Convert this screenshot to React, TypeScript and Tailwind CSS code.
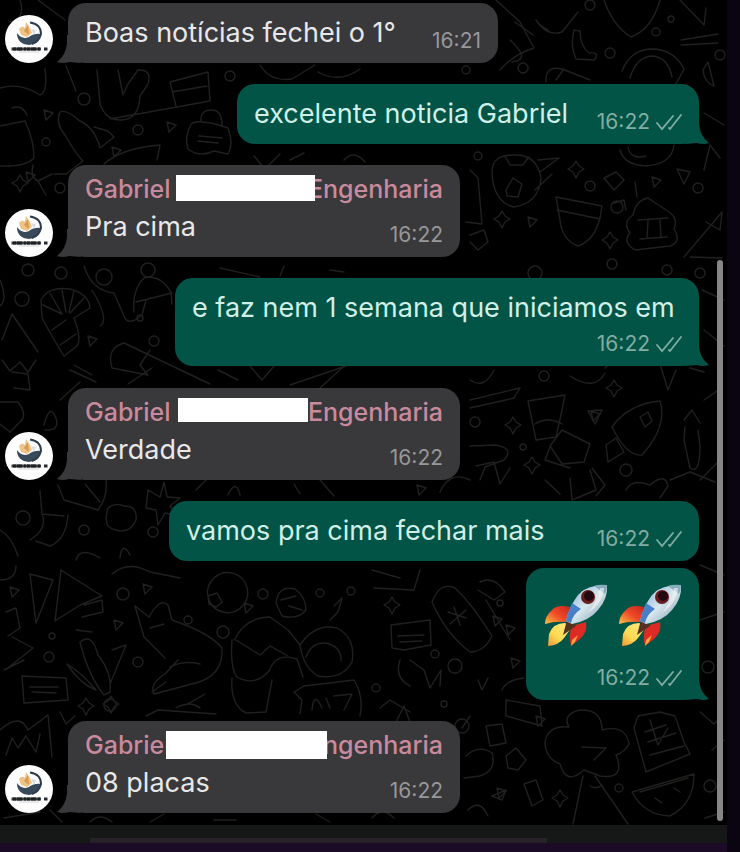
import React from 'react';

type Message = {
  id: number;
  from: 'me' | 'gabriel';
  time: string;
  text?: string;
  width: string;
  // classes of the bar that hides the middle of the sender's name
  mask?: string;
  rockets?: number;
  timeBelow?: boolean;
  tail?: boolean;
  spacing: string;
};

const MESSAGES: Message[] = [
  { id: 1, from: 'gabriel', text: 'Boas notícias fechei o 1°', time: '16:21', width: 'w-[430px]', tail: true, spacing: '' },
  { id: 2, from: 'me', text: 'excelente noticia Gabriel', time: '16:22', width: 'w-[462px]', tail: true, spacing: 'mt-[21px]' },
  { id: 3, from: 'gabriel', text: 'Pra cima', time: '16:22', width: 'w-[392px]', mask: 'left-[91px] w-[139px] h-[26px]', tail: true, spacing: 'mt-[21px]' },
  { id: 4, from: 'me', text: 'e faz nem 1 semana que iniciamos em', time: '16:22', width: 'w-[524px]', timeBelow: true, tail: true, spacing: 'mt-[21px]' },
  { id: 5, from: 'gabriel', text: 'Verdade', time: '16:22', width: 'w-[392px]', mask: 'left-[93px] w-[130px] h-6', tail: true, spacing: 'mt-[22px]' },
  { id: 6, from: 'me', text: 'vamos pra cima fechar mais', time: '16:22', width: 'w-[530px]', spacing: 'mt-[21px]' },
  { id: 7, from: 'me', rockets: 2, time: '16:22', width: 'w-[173px]', timeBelow: true, tail: true, spacing: 'mt-[7px]' },
  { id: 8, from: 'gabriel', text: '08 placas', time: '16:22', width: 'w-[392px]', mask: 'left-[81px] w-[161px] h-7', tail: true, spacing: 'mt-[21px]' },
];

// [cx, cy, r]
const DOTS = [
  [84, 99, 6], [138, 130, 5], [230, 76, 5], [46, 142, 4], [60, 188, 5], [590, 5, 5], [656, 32, 4], [671, 19, 3], [610, 53, 5],
  [523, 68, 5], [466, 70, 4], [720, 55, 5], [590, 186, 5], [698, 188, 5], [617, 207, 6], [478, 156, 4], [28, 270, 6], [61, 273, 6],
  [104, 277, 8], [22, 299, 7], [148, 270, 7], [154, 341, 5], [140, 318, 3], [535, 273, 7], [612, 264, 5], [667, 270, 5], [700, 273, 5],
  [475, 422, 5], [523, 447, 3], [626, 470, 6], [23, 518, 7], [84, 530, 5], [153, 532, 5], [544, 376, 5], [49, 657, 5], [52, 636, 3],
  [138, 662, 5], [188, 620, 4], [223, 632, 6], [263, 594, 5], [320, 593, 4], [351, 591, 4], [435, 654, 4], [455, 666, 7], [619, 788, 4],
  [710, 786, 6], [462, 726, 7], [444, 704, 3], [110, 705, 6], [708, 667, 6], [300, 352, 4], [500, 603, 3], [376, 688, 4], [123, 594, 6],
];

// small triangles and sparkles, placed by their centre
const TRIANGLES = [
  [171, 126], [116, 151], [48, 114], [92, 340], [532, 221], [595, 415], [510, 629], [497, 620], [501, 792], [147, 588], [118, 624],
  [248, 607], [540, 720], [515, 662], [421, 489], [14, 591], [30, 176], [656, 181],
];

const SPARKLES = [
  [576, 169], [614, 388], [513, 425], [392, 605], [111, 704], [532, 465], [610, 240], [502, 219], [20, 183], [86, 706], [560, 798], [448, 792],
];

const DOODLES = [
  // bottle, bag and cup in the upper left
  'M97 70 L100 104 Q106 121 122 120 Q139 119 140 96 L148 84 Q152 69 138 70 L128 84 L123 95 L118 70 M110 119 L210 101 L208 72 L170 82 L176 106 M172 92 L207 86',
  'M0 88 Q20 82 40 95 Q48 92 45 69 M0 126 L25 121 Q34 140 34 158 Q26 167 0 166 M27 115 Q22 104 12 108',
  'M60 112 Q66 109 80 121 Q95 128 100 148 M60 112 Q55 123 65 135 Q75 153 83 161 L66 174 L54 174 M100 148 L114 137 L108 131 L94 127 M104 164 Q122 148 160 145 L157 160 M33 165 Q30 178 38 181 L52 174 M38 181 L46 195',
  'M191 124 Q199 118 228 128 Q234 144 228 154 L214 151 Q200 158 188 149 Q184 138 191 124 M201 122 Q200 109 213 110 Q222 111 222 125 M199 136 L222 138 M198 141 L218 143',
  'M254 156 L265 169 L280 154 M290 160 L304 153 M344 160 Q354 149 365 162 M260 65 Q270 82 292 79 L315 65 M318 72 Q339 84 360 69 M66 66 L72 81 L76 91 M20 0 Q26 18 10 22 M38 0 L65 20',
  // top right
  'M604 0 Q613 26 631 37 Q652 29 660 0 M622 71 Q630 50 651 49 Q674 49 684 69 L676 84 M630 78 Q636 57 652 56 Q668 57 672 77 M546 82 Q545 65 562 69 L590 80 M556 80 L564 69 M680 0 L704 25 L706 8 M681 40 L718 34 M681 45 L718 43',
  'M574 30 Q570 46 576 59 L594 60 Q601 52 589 53 Q580 46 580 31 Z M536 20 Q547 37 562 32 L578 12 M540 25 L548 30 M496 0 L520 22 L534 48 Q514 54 500 70 M515 22 L533 35 M510 40 Q532 60 512 62 M708 62 L714 86 Q704 82 703 70 Z',
  'M492 172 Q492 154 516 155 Q537 155 541 178 Q539 203 514 207 Q493 202 492 172 Z M505 156 L510 165 L523 165 L529 157 M506 190 L513 178 L522 184 L518 197 L507 196 Z M540 172 L559 158 L538 160 M535 190 L552 174',
  'M556 197 L602 206 L600 218 Q594 241 578 246 Q562 240 560 220 Z M557 210 L600 219 M620 150 Q624 165 646 166 Q672 164 674 145 M628 147 Q630 160 646 156 M604 178 L616 172 L624 180 L614 190 Z M677 169 L690 172 L684 184 Z',
  'M633 215 Q636 200 648 198 L666 210 Q679 217 674 229 Q682 242 670 246 L635 250 Q622 242 630 233 Q622 222 633 215 Z M638 220 L668 218 M640 239 L667 237 M648 220 L647 238 M660 220 L661 237 M637 197 L635 182',
  'M684 257 L722 212 L720 230 L706 222 M470 170 L478 178 L482 224 L466 222 M470 235 L484 230 L488 242 L478 250 L470 242 M690 257 L722 258 M704 113 L724 125 M704 170 L710 145 L720 158 M614 203 L624 200 L626 210',
  // left middle
  'M41 300 Q48 286 70 289 Q89 294 90 308 L74 318 Q82 339 77 346 L64 356 Q52 337 42 318 Z M50 293 L62 314 M43 305 L62 314 M62 290 L66 312 M74 291 L69 312 M84 298 L70 313 M52 330 L66 320 M60 345 L76 334',
  'M84 266 Q92 291 114 293 L124 316 Q128 327 142 315 L146 300 M92 290 Q110 320 100 326 M0 280 Q8 300 0 306 M12 314 L38 352 M12 314 L2 340 M2 360 L10 371 L20 362 L28 372 L36 360 M12 372 L28 374 L30 390 L14 388',
  'M134 312 Q132 290 144 278 Q160 274 171 292 L172 304 M136 302 L172 293 M112 368 Q106 348 124 343 L210 384 M112 368 L148 375 L140 365 L150 350 M128 384 L152 368 M60 400 L80 382 M70 370 L96 382 M74 365 L92 375',
  'M0 402 L18 402 Q28 415 20 422 L10 432 L0 424 M44 425 Q50 402 56 418 Q60 431 45 430 M40 491 L42 514 L64 516 M42 514 Q48 529 30 540 M68 515 Q66 540 50 546 L36 541 M58 485 L64 500 L98 510 Q108 497 106 480 M100 502 L85 484',
  'M108 508 Q116 502 124 506 Q138 506 136 520 Q130 534 116 530 Q102 528 108 508 Z M148 490 L160 497 L164 482 L167 497 L180 498 L170 506 L178 516 L165 513 L158 525 L156 510 L146 508 Z M0 530 Q12 537 18 556 M76 560 Q80 546 100 558 M120 558 Q122 540 130 555',
  'M218 370 L238 380 M250 366 L262 380 L274 366 M290 385 L346 366 M344 366 L320 388 M220 268 L260 277 M280 276 L284 266 M330 270 L344 272 M196 490 L206 480 M228 495 Q236 478 240 495 M294 484 L300 494 M320 480 L334 496',
  // right middle
  'M470 400 L520 388 L514 398 L470 408 M470 380 Q484 390 494 370 M528 401 L565 395 L562 410 L556 437 L536 440 Z M550 446 L562 430 L590 444 L584 462 L562 464 Z M550 447 L545 460 L570 468 M535 424 Q548 416 562 424',
  'M612 427 Q628 404 660 401 Q668 426 642 455 Q627 457 612 427 Z M606 445 L616 438 L624 452 L608 462 Z M588 411 L602 410 L595 424 Z M640 417 L648 412 L652 421 L645 427 Z M605 368 L620 355 M570 376 Q595 392 605 373',
  'M685 427 L684 440 L690 468 Q700 475 700 446 L698 430 M684 420 L692 410 L700 423 M704 400 L720 389 M700 480 L720 460 M470 446 L495 445 Q515 448 504 460 L485 467 L480 480 M470 480 Q450 470 440 492',
  'M570 478 L572 500 L596 490 L590 470 M592 468 L605 485 L596 496 M626 490 Q632 478 650 485 Q665 472 668 486 L660 498 M476 466 L494 462 L500 484 L510 468 M560 494 L545 480 M670 480 L690 472 L715 482 M702 290 L724 300 M704 330 L724 346 M690 368 L704 372 M660 364 L668 390 L676 370',
  // lower left
  'M30 574 L53 580 L36 623 Z M61 570 L102 596 L80 605 L55 621 Z M84 605 L102 600 L103 612 L82 617 M112 574 Q128 560 150 572 L180 578 M0 580 Q16 580 16 566 M6 612 L16 608 L20 628 L8 636 M12 637 L33 648 L8 668 M4 670 L24 660',
  'M135 606 L149 617 Q160 597 168 605 L172 620 Q210 633 222 648 Q224 677 192 684 L154 694 Q149 684 165 674 L178 660 M135 606 L144 637 L165 658 M150 628 L164 624 M170 667 Q184 660 200 664 M152 692 L166 682',
  'M80 642 Q92 632 98 655 Q112 672 110 692 L104 695 Q88 675 80 642 Z M67 664 Q82 673 96 690 M67 664 Q80 684 96 690 M112 650 L126 645 L110 684 M76 630 L92 632 M22 676 L66 678 L68 700 L24 703 Z M30 687 L58 687 M32 692 L56 693',
  'M214 578 A20 20 0 1 1 213 579 M208 596 L217 593 L222 602 L216 607 L209 604 Z M276 603 Q278 585 295 589 Q306 597 306 610 Q298 620 282 616 Z M281 600 L296 596 M289 606 L302 610 M334 606 L342 598 L338 612 L330 620',
  'M234 640 Q246 617 270 617 L288 630 L300 645 Q315 623 337 628 Q356 638 352 662 Q342 680 318 676 Q303 667 300 645 M306 657 Q311 642 326 643 Q342 647 341 661 M232 640 Q230 669 237 677 Q255 687 269 671 Q276 652 297 659 L303 677',
  'M236 640 L260 655 L270 646 L288 656 M232 678 Q230 705 246 713 L266 712 L272 680 M294 692 L304 686 L354 680 Q364 696 360 716 M294 692 L302 700 L300 714 M312 710 Q314 690 322 708 M326 698 L330 708 M334 696 L352 694 L344 710 M0 730 Q20 712 28 730 L48 715 L52 757 M6 755 L12 738 L18 748 L26 736 L36 752 L40 734',
  'M146 716 L158 710 L216 714 M176 708 Q190 700 200 708 M186 705 L205 694 M60 712 L66 724 L75 716 M4 818 L40 812 M50 810 L62 822 M150 822 L164 814 M214 820 L236 820 M372 818 Q382 806 394 818 M316 814 L330 822',
  // lower right
  'M432 602 Q440 581 455 588 Q473 605 492 636 Q484 652 470 652 Q446 634 432 602 Z M448 612 L466 618 M454 607 L460 625 M450 624 L466 610 M391 625 L430 620 L431 645 L404 650 L392 648 Z M398 636 L424 635 M400 642 L422 641',
  'M400 660 Q394 678 410 686 M410 660 L424 670 L430 688 L441 670 L440 686 M480 582 Q494 575 505 592 L494 600 L478 590 M374 588 L414 590 L420 570 M372 570 L400 578 M486 600 L510 640 M506 700 L540 706 L542 726 L506 716 Z M502 690 Q506 680 524 678',
  'M486 726 L502 724 L506 743 L490 746 Z M466 756 Q478 744 492 753 Q497 771 480 776 L464 778 M506 756 L516 748 L526 760 L518 770 L508 768 Z M524 784 L536 780 L543 800 L532 806 Z M470 716 L462 728 M492 796 L506 790 L502 800 Z M468 810 Q480 798 488 816',
  'M569 727 Q562 714 580 710 Q602 709 602 730 Q626 724 629 744 Q625 752 616 755 Q626 780 600 776 L584 770 Q566 786 560 764 Q545 758 545 742 Q548 725 569 727 M582 747 L606 748 L594 760 M583 776 L573 824 M595 776 L628 824 M590 786 Q596 790 602 785',
  'M634 728 L638 716 L660 712 L675 716 L684 742 L690 754 L646 772 Z M645 732 L666 725 M648 742 L676 733 M650 755 L684 746 M650 720 L658 745 L668 728 M632 792 L694 774 Q694 804 670 816 Q644 815 632 792 Z M640 792 L688 778 M655 798 L662 803 M674 788 L680 792 M700 712 L714 724 L722 716',
  'M380 708 L390 700 L410 712 M396 722 L404 706 L410 722 M478 680 L482 690 L488 678 M372 745 L386 752 M700 565 L724 575 M700 620 L724 612 M712 750 L724 740 M705 818 L724 812 M90 822 Q100 812 112 822 M372 760 L386 770',
];

const Wallpaper = () => (
  <svg className="absolute inset-0 h-full w-full" viewBox="0 0 727 825" preserveAspectRatio="xMinYMin slice" fill="none" stroke="#20201f" strokeWidth="1.4" strokeLinecap="round" strokeLinejoin="round" aria-hidden="true">
    {DOODLES.map((d) => (
      <path key={d} d={d} />
    ))}
    {DOTS.map(([x, y, r]) => (
      <circle key={`${x}-${y}`} cx={x} cy={y} r={r} />
    ))}
    {TRIANGLES.map(([x, y]) => (
      <path key={`${x}-${y}`} d={`M${x - 4} ${y - 4}l9 3l-7 7z`} />
    ))}
    {SPARKLES.map(([x, y]) => (
      <path key={`${x}-${y}`} d={`M${x} ${y - 8}l3 5l5 3l-5 3l-3 6l-3 -6l-5 -3l5 -3z`} />
    ))}
  </svg>
);

const Avatar = () => (
  <svg className="h-12 w-12 shrink-0" viewBox="0 0 48 48" role="img" aria-label="Gabriel">
    <circle cx="24" cy="24" r="24" fill="#fdfdfd" />
    <path d="M12 18 Q12 29 24 30 Q34 29 36 19 Q29 18 24 22 Q17 25 12 18 Z" fill="#38495a" />
    <path d="M25 7.500 Q36 9 36 19 Q34 27 27 29" fill="none" stroke="#2d3c4b" strokeWidth="2" />
    <path d="M14 14 Q17 10 20 13 L21 7 L25 13 L27 18 L22 22 L16 20 Z" fill="#efc387" />
    <path d="M19 16 L23 10 L24 20 Z" fill="#d79a51" />
    <path d="M26 14 L31 15 L29 20 Z" fill="#d9e0e4" />
    <path d="M6.500 34 H36" stroke="#3a3f43" strokeWidth="3" />
    <path d="M8 34 H35" stroke="#1d2124" strokeWidth="3" strokeDasharray="3 1 5 2 2 1" />
    <path d="M39 34 H42.500" stroke="#25292d" strokeWidth="3" />
    <path d="M14 37 H34" stroke="#cfd3d5" strokeWidth="1" />
  </svg>
);

const Rocket = () => (
  <svg className="h-16 w-16" viewBox="0 0 64 64" role="img" aria-label="foguete">
    <defs>
      <linearGradient id="hull" x1="0" y1="0" x2="1" y2="1">
        <stop offset="0" stopColor="#6f9fd8" />
        <stop offset=".5" stopColor="#d9e8ef" />
        <stop offset="1" stopColor="#7796a9" />
      </linearGradient>
      <linearGradient id="fin" x1="1" y1="0" x2="0" y2="1">
        <stop offset="0" stopColor="#c5241f" />
        <stop offset=".5" stopColor="#f04a27" />
        <stop offset="1" stopColor="#fbc548" />
      </linearGradient>
      <linearGradient id="flame" x1="1" y1="0" x2="0" y2="1">
        <stop offset="0" stopColor="#ffe985" />
        <stop offset=".6" stopColor="#fbdc55" />
        <stop offset="1" stopColor="#f59636" />
      </linearGradient>
    </defs>
    <path d="M26 23 Q13 20 8 26 Q1 32 1 40 Q11 37 22 38 Z" fill="url(#fin)" />
    <path d="M28 42 L42 38 Q44 48 36 55 L27 62 Q24 52 28 42 Z" fill="#dc2b24" />
    <path d="M28 56 L34 51 L31 58 L27 62 Z" fill="#f6a23e" />
    <path d="M21 39 Q9 39 5 50 L4 62 Q15 61 20 54 L28 43 Z" fill="url(#flame)" />
    <path d="M23 36 L29 38 L32 42 L19 51 Z" fill="#543123" />
    <path d="M63 1 Q44 0 34 11 Q25 23 22 37 L28 40 Q45 37 54 26 Q64 15 63 1 Z" fill="url(#hull)" />
    <path d="M28 19 Q24 28 22 37 L27 39 Q29 30 37 25 Z" fill="#477fc9" />
    <path d="M63 1 Q55 0 50 2 L61 10 Q63 6 63 1 Z" fill="#86adbd" />
    <ellipse cx="44" cy="13" rx="8" ry="8" fill="#c9d7de" />
    <circle cx="44" cy="13" r="7" fill="#671d20" />
    <circle cx="45" cy="12" r="5" fill="#230a10" />
    <path d="M60 4 Q59 19 44 29 Q55 15 56 4 Z" fill="#f2f5ef" opacity=".65" />
  </svg>
);

const Ticks = () => (
  <svg className="h-[18px] w-[26px]" viewBox="0 0 26 18" fill="none" stroke="currentColor" strokeWidth="1.800" strokeLinecap="round" role="img" aria-label="entregue">
    <path d="M1 10 L6 16 L17 3" />
    <path d="M13 15 L14 16 L25 2" />
  </svg>
);

const Tail = ({ mine }: { mine: boolean }) => (
  <svg
    className={mine ? 'absolute -right-[10px] bottom-0 h-7 w-6 text-[#025447]' : 'absolute -left-[11px] bottom-0 h-7 w-6 -scale-x-100 text-[#39383b]'}
    viewBox="0 0 24 28"
    fill="currentColor"
    aria-hidden="true"
  >
    <path d="M0 0 H14 V8 Q15 20 24 27 Q18 29 12 27 L0 28 Z" />
  </svg>
);

const Time = ({ message }: { message: Message }) => (
  <div className={`flex h-6 shrink-0 items-center gap-[6px] text-[21px] leading-6 ${message.from === 'me' ? 'text-[#81ada3]' : 'text-[#98979a]'}`}>
    <time>{message.time}</time>
    {message.from === 'me' && <Ticks />}
  </div>
);

const Bubble = ({ message }: { message: Message }) => {
  const mine = message.from === 'me';

  return (
    <div className={`relative rounded-[18px] px-[17px] py-[10px] ${message.width} ${mine ? 'bg-[#025447] text-[#d0efe6]' : 'bg-[#39383b] text-[#e8e8e9]'}`}>
      {message.tail && <Tail mine={mine} />}
      {message.mask && (
        <div className="relative mb-1 flex justify-between text-[25px] leading-7 font-medium text-[#c98a9d]">
          <span>Gabriel</span>
          <span>Engenharia</span>
          <span className={`absolute top-0 bg-white ${message.mask}`} />
        </div>
      )}
      <div className={message.timeBelow ? 'relative flex flex-col items-end' : 'relative flex items-end justify-between'}>
        {message.text && <p className={`text-[27px] leading-10 whitespace-nowrap ${message.timeBelow ? 'mb-1 self-start' : ''}`}>{message.text}</p>}
        {message.rockets && (
          <div className="mt-[6px] mb-[18px] flex gap-[10px]">
            {Array.from({ length: message.rockets }, (_, i) => (
              <Rocket key={i} />
            ))}
          </div>
        )}
        <Time message={message} />
      </div>
    </div>
  );
};

export default function App() {
  return (
    <div className="min-h-screen bg-[#0b0411] pr-[13px] font-[Inter,sans-serif]">
      <main className="relative overflow-hidden bg-black pt-[3px] pr-7 pb-3 pl-[5px]">
        <Wallpaper />
        <ul className="relative">
          {MESSAGES.map((message) => (
            <li key={message.id} className={`flex items-end gap-[15px] ${message.spacing} ${message.from === 'me' ? 'justify-end' : ''}`}>
              {message.from === 'gabriel' && <Avatar />}
              <Bubble message={message} />
            </li>
          ))}
        </ul>
        <div className="absolute top-[260px] right-1 bottom-1 w-[6px] rounded-full bg-[#888588]" />
      </main>
      <footer className="h-[18px] bg-[#151817] px-[90px] pt-[13px]">
        <div className="mr-[90px] h-[5px] bg-[#27222a]" />
      </footer>
      <div className="h-[9px] bg-[#1b0b27]" />
    </div>
  );
}
